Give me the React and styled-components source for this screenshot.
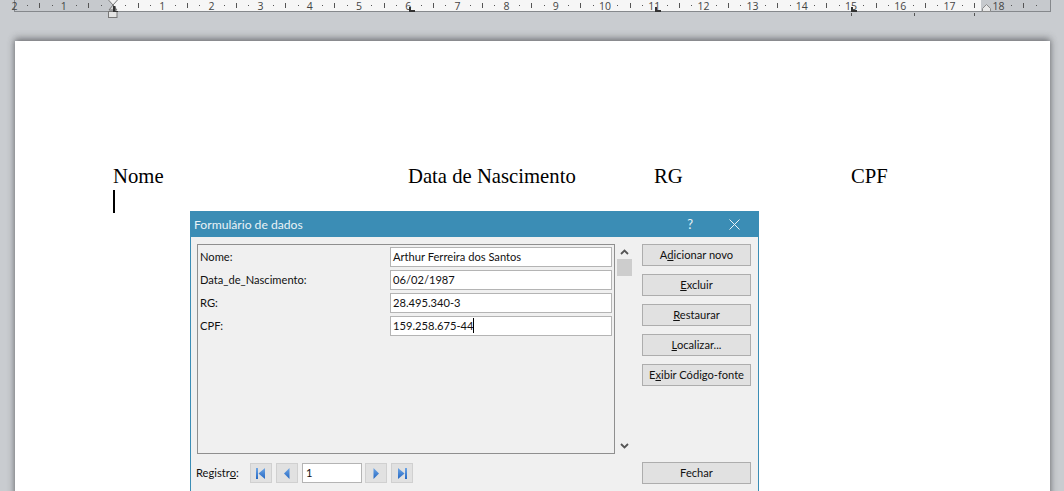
import React from "react";
import styled, { createGlobalStyle } from "styled-components";

const Global = createGlobalStyle`
  html, body { margin: 0; padding: 0; background: #c9ccd0; }
  #root { width: 1064px; height: 491px; overflow: hidden; }
`;

const Screen = styled.div`
  position: relative;
  width: 1064px;
  height: 491px;
  overflow: hidden;
  display: flex;
  flex-direction: column;
  background: #c9ccd0;
`;

const RulerSvg = styled.svg`
  display: block;
  flex: none;
  width: 1064px;
  height: 20px;
  margin-bottom: 21px;
  font-family: "Open Sans", sans-serif;
  font-size: 10.500px;
`;

const Workspace = styled.div`
  flex: 1;
  min-height: 0;
  padding: 0 14px 0 15px;
`;

const Page = styled.div`
  height: 100%;
  background: #fff;
  padding: 122px 0 0 98px;
  box-shadow: 0 -3px 7px rgba(70, 72, 76, 0.45), 0 0 6px rgba(70, 72, 76, 0.5);
  font-family: "Liberation Serif", serif;
  font-size: 20.700px;
  color: #000;
`;

const Headings = styled.div`
  display: flex;
  line-height: 27px;
`;

const Heading = styled.div`
  width: ${(p) => p.$w}px;
  flex: none;
`;

const Caret = styled.div`
  width: 2px;
  height: 23px;
  background: #000;
`;

const Dialog = styled.div`
  position: absolute;
  left: 190px;
  top: 211px;
  width: 569px;
  height: 280px;
  box-sizing: border-box;
  border: 1px solid #3b8db5;
  border-top: 0;
  border-bottom: 0;
  background: #f0f0f0;
  font-family: "Lato", sans-serif;
  font-size: 11.150px;
  color: #111;
`;

const TitleBar = styled.div`
  height: 26px;
  margin: 0 -1px;
  padding: 0 19px 0 4px;
  display: flex;
  align-items: center;
  background: #3b8db5;
  color: #eaf3f7;
  font-size: 12.150px;
`;

const TitleText = styled.span`
  flex: 1;
`;

const Help = styled.span`
  margin-right: 36px;
  font-size: 13px;
`;

const Body = styled.div`
  display: grid;
  grid-template-columns: 418px 27px 109px;
  grid-template-rows: 210px auto;
  padding: 7px 7px 0 6px;
`;

const FormBox = styled.div`
  box-sizing: border-box;
  border: 1px solid #8f8f8f;
  padding: 2px;
  display: grid;
  grid-template-columns: 190px 222px;
  grid-auto-rows: 20px;
  row-gap: 3px;
`;

const Label = styled.div`
  line-height: 19px;
`;

const Field = styled.div`
  box-sizing: border-box;
  height: 20px;
  border: 1px solid #b4b4b4;
  background: #fff;
  padding: 0 2px;
  line-height: 18px;
  white-space: nowrap;
`;

const FieldCaret = styled.span`
  display: inline-block;
  width: 1px;
  height: 15px;
  background: #000;
  vertical-align: -3px;
`;

const ScrollBar = styled.div`
  margin-left: 2px;
  width: 15px;
  height: 200px;
  display: flex;
  flex-direction: column;
  align-items: center;
  padding-top: 5px;
`;

const Thumb = styled.div`
  width: 15px;
  height: 17px;
  margin-top: 4px;
  background: #cdcdcd;
`;

const Spacer = styled.div`
  flex: 1;
`;

const Buttons = styled.div`
  display: flex;
  flex-direction: column;
  gap: 8px;
`;

const Btn = styled.div`
  box-sizing: border-box;
  width: 109px;
  height: 22px;
  border: 1px solid #adadad;
  background: #e1e1e1;
  text-align: center;
  line-height: 19px;
  white-space: nowrap;
`;

const Nav = styled.div`
  grid-column: 1 / span 2;
  height: 20px;
  margin-top: 9px;
  display: flex;
  align-items: center;
`;

const NavLabel = styled.div`
  width: 54px;
  line-height: 20px;
  margin-left: -1px;
`;

const NavBtn = styled.div`
  box-sizing: border-box;
  width: 22px;
  height: 20px;
  margin-right: ${(p) => p.$mr}px;
  border: 1px solid #d0d0d0;
  background: #e1e1e1;
  display: flex;
  align-items: center;
  justify-content: center;
`;

const NavInput = styled.div`
  box-sizing: border-box;
  width: 60px;
  height: 20px;
  margin-right: 3px;
  border: 1px solid #b4b4b4;
  background: #fff;
  padding: 0 3px;
  line-height: 17px;
`;

const CloseRow = styled.div`
  grid-column: 3;
  margin-top: 8px;
`;

const range = (a, b) => Array.from({ length: b - a + 1 }, (_, i) => a + i);
const U = 49.2;
const X0 = 113;

function Ruler() {
  const ticks = [];
  for (let c = -2; c < 19; c++) {
    const base = X0 + c * U;
    [0.25, 0.5, 0.75].forEach((f) => {
      const x = Math.round(base + f * U);
      if (x > 1046) return;
      ticks.push(
        f === 0.5
          ? <rect key={`${c}-${f}`} x={x} y="3" width="1" height="5" fill="#555" />
          : <rect key={`${c}-${f}`} x={x} y="5" width="1" height="1" fill="#555" />
      );
    });
  }
  return (
    <RulerSvg viewBox="0 0 1064 20">
      <rect x="14" y="0" width="99" height="11" fill="#c6c9cd" />
      <rect x="113" y="0" width="868" height="11" fill="#f6f6f6" />
      <rect x="981" y="0" width="69" height="11" fill="#c6c9cd" />
      <rect x="14" y="11" width="1036" height="1" fill="#85888c" />
      <rect x="14" y="0" width="1" height="11" fill="#85888c" />
      <rect x="1050" y="0" width="1" height="12" fill="#85888c" />
      {ticks}
      {range(1, 2).map((n) => (
        <text key={`l${n}`} x={X0 - n * U} y="9.500" textAnchor="middle" fill="#444">{n}</text>
      ))}
      {range(1, 18).map((n) => (
        <text key={n} x={X0 + n * U} y="9.500" textAnchor="middle" fill="#444">{n}</text>
      ))}
      <path d="M108.500 0 L113 5 L117.500 0" fill="#f2f2f2" stroke="#777" />
      <path d="M113 5 L117 10 L109 10 Z" fill="#d8d8d8" stroke="#777" />
      <rect x="108.500" y="11.500" width="8.500" height="6" fill="#e4e4e4" stroke="#777" />
      <path d="M113 6h2.500v5h2.500v1h-5z" fill="#333" />
      {[409, 655, 851].map((x) => (
        <path key={x} d={`M${x} 7h2v3h4v2h-6z`} fill="#333" />
      ))}
      {[851, 914, 974].map((x) => (
        <rect key={x} x={x} y="13" width="1" height="3" fill="#555" />
      ))}
      <path d="M982.500 11.500V8.500L986.500 4.500L990.500 8.500V11.500Z" fill="#e8e8e8" stroke="#8a8a8a" />
    </RulerSvg>
  );
}

function NavIcon({ kind }) {
  const fill = "url(#navBlue)";
  const shapes = {
    first: <><rect x="1" y="1" width="2" height="11" fill={fill} /><path d="M10 1V12L3.500 6.500Z" fill={fill} /></>,
    prev: <path d="M8.500 1V12L3 6.500Z" fill={fill} />,
    next: <path d="M3.500 1V12L9 6.500Z" fill={fill} />,
    last: <><path d="M2 1V12L8.500 6.500Z" fill={fill} /><rect x="9" y="1" width="2" height="11" fill={fill} /></>,
  };
  return (
    <svg width="12" height="13" viewBox="0 0 12 13">
      <defs>
        <linearGradient id="navBlue" x1="0" y1="0" x2="0" y2="1">
          <stop offset="0" stopColor="#6ea6e6" />
          <stop offset="1" stopColor="#2467c2" />
        </linearGradient>
      </defs>
      {shapes[kind]}
    </svg>
  );
}

const Chevron = ({ down }) => (
  <svg width="9" height="6" viewBox="0 0 9 6">
    <path d={down ? "M1 1L4.500 4.500L8 1" : "M1 5L4.500 1.500L8 5"} fill="none" stroke="#555" strokeWidth="1.800" />
  </svg>
);

export default function App() {
  return (
    <Screen>
      <Global />
      <Ruler />
      <Workspace>
        <Page>
          <Headings>
            <Heading $w={295}>Nome</Heading>
            <Heading $w={246}>Data de Nascimento</Heading>
            <Heading $w={197}>RG</Heading>
            <Heading $w={100}>CPF</Heading>
          </Headings>
          <Caret />
        </Page>
      </Workspace>
      <Dialog>
        <TitleBar>
          <TitleText>Formulário de dados</TitleText>
          <Help>?</Help>
          <svg width="11" height="11" viewBox="0 0 11 11">
            <path d="M0.500 0.500L10.500 10.500M10.500 0.500L0.500 10.500" stroke="#eaf3f7" strokeWidth="1" fill="none" />
          </svg>
        </TitleBar>
        <Body>
          <FormBox>
            <Label>Nome:</Label>
            <Field>Arthur Ferreira dos Santos</Field>
            <Label>Data_de_Nascimento:</Label>
            <Field>06/02/1987</Field>
            <Label>RG:</Label>
            <Field>28.495.340-3</Field>
            <Label>CPF:</Label>
            <Field>159.258.675-44<FieldCaret /></Field>
          </FormBox>
          <ScrollBar>
            <Chevron />
            <Thumb />
            <Spacer />
            <Chevron down />
          </ScrollBar>
          <Buttons>
            <Btn>A<u>d</u>icionar novo</Btn>
            <Btn><u>E</u>xcluir</Btn>
            <Btn><u>R</u>estaurar</Btn>
            <Btn><u>L</u>ocalizar...</Btn>
            <Btn>E<u>x</u>ibir Código-fonte</Btn>
          </Buttons>
          <Nav>
            <NavLabel>Registr<u>o</u>:</NavLabel>
            <NavBtn $mr={4}><NavIcon kind="first" /></NavBtn>
            <NavBtn $mr={4}><NavIcon kind="prev" /></NavBtn>
            <NavInput>1</NavInput>
            <NavBtn $mr={4}><NavIcon kind="next" /></NavBtn>
            <NavBtn $mr={0}><NavIcon kind="last" /></NavBtn>
          </Nav>
          <CloseRow>
            <Btn>Fechar</Btn>
          </CloseRow>
        </Body>
      </Dialog>
    </Screen>
  );
}
